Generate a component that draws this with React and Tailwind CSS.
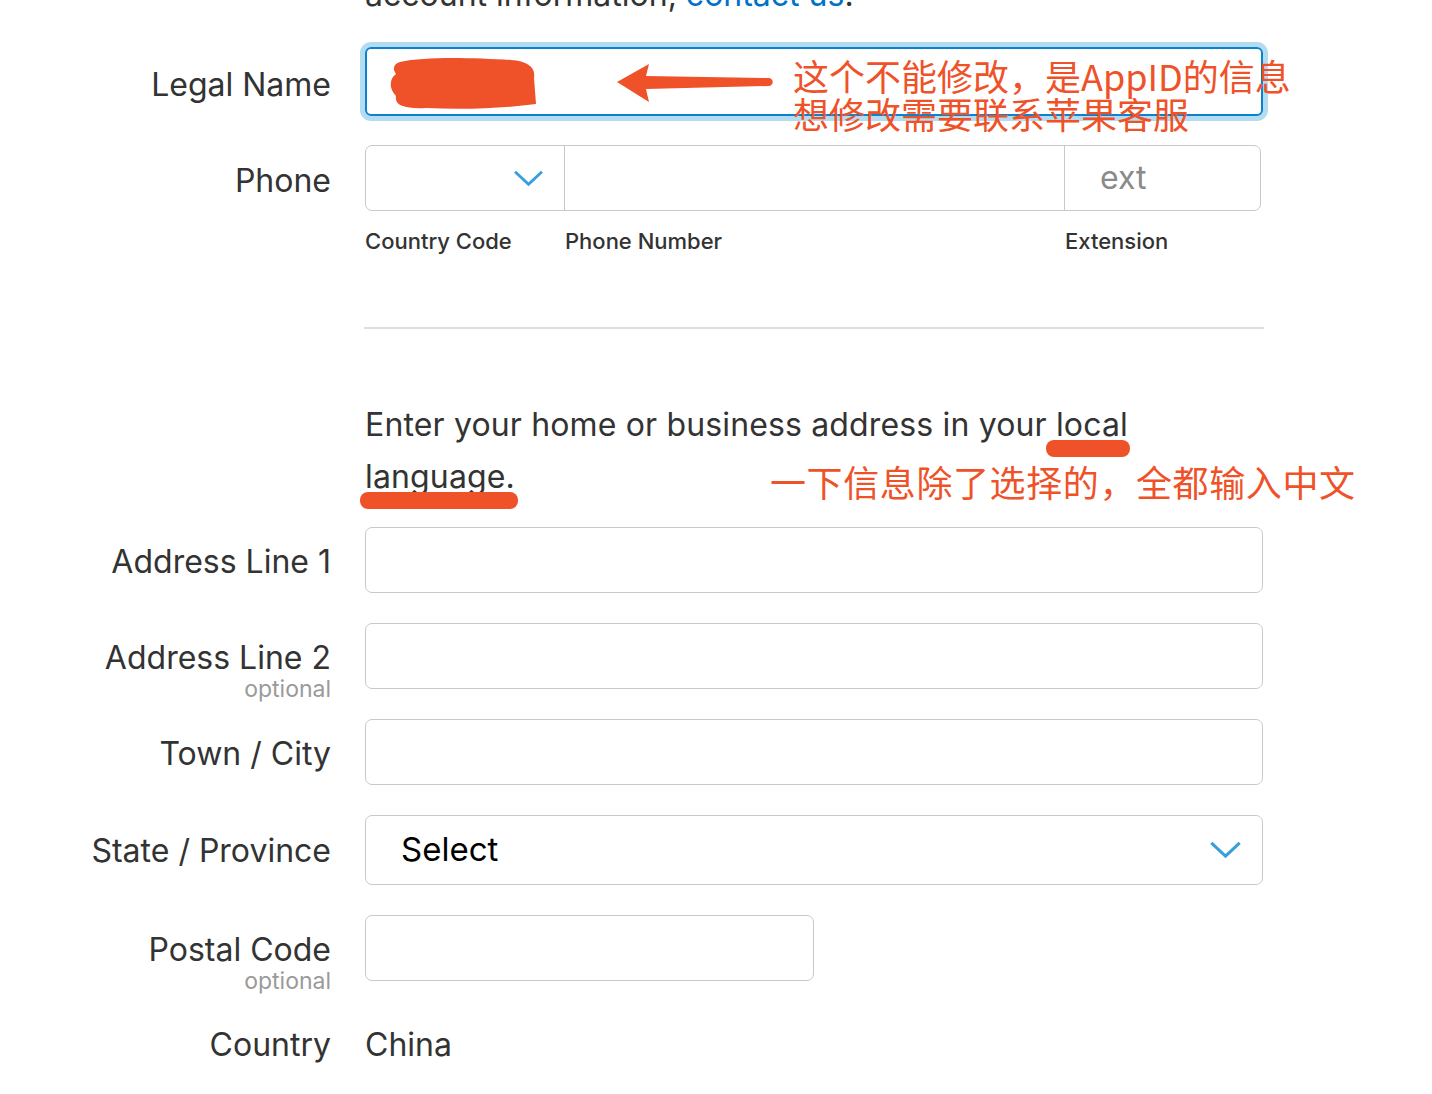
import React from 'react';

const ORANGE = '#ef5228';

function Chevron({ className }) {
  return (
    <svg viewBox="0 0 34 19" className={className} fill="none">
      <path d="M2 2 L17 16 L32 2" stroke="#36a0dc" strokeWidth="3.2" />
    </svg>
  );
}

function Label({ children, optional, pt = 'pt-[15px]' }) {
  return (
    <div className={`w-[331px] shrink-0 ${pt} text-right`}>
      <div className="text-[32px] leading-[40px] text-[#333]">{children}</div>
      {optional && <div className="text-[23px] leading-[22px] text-[#9a9a9a]">optional</div>}
    </div>
  );
}

function TextInput({ w = 'w-[898px]' }) {
  return <div className={`${w} h-[66px] rounded-[7px] border-[1.5px] border-[#c9c9c9] bg-white`} />;
}

export default function App() {
  return (
    <div
      className="relative h-[1094px] w-[1432px] overflow-hidden bg-white"
      style={{ fontFamily: 'Inter, "Noto Sans CJK SC", sans-serif' }}
    >
      <p className="ml-[365px] mt-[-25px] text-[32px] leading-[40px] text-[#333]">
        account information, <span className="text-[#0070c9]">contact us</span>.
      </p>

      {/* legal name */}
      <div className="mt-[32px] flex">
        <Label pt="pt-[18px]">Legal Name</Label>
        <div className="ml-[34px] h-[69px] w-[898px] rounded-[6px] border-2 border-[#0a82d0] shadow-[0_0_0_5px_#b4dcf0]" />
      </div>

      {/* phone */}
      <div className="mt-[29px] flex">
        <Label pt="pt-[16px]">Phone</Label>
        <div className="ml-[34px]">
          <div className="flex h-[66px] w-[896px] rounded-[7px] border-[1.5px] border-[#c9c9c9]">
            <div className="flex w-[198px] items-center justify-end pr-[20px]">
              <Chevron className="h-[17px] w-[31px]" />
            </div>
            <div className="w-[500px] border-l-[1.5px] border-[#c9c9c9]" />
            <div className="flex flex-1 items-center border-l-[1.5px] border-[#c9c9c9] pl-[35px] text-[32px] text-[#8a8a8a]">
              ext
            </div>
          </div>
          <div className="mt-[16px] flex text-[22px] font-medium leading-[28px] text-[#333]">
            <div className="w-[200px]">Country Code</div>
            <div className="w-[500px]">Phone Number</div>
            <div>Extension</div>
          </div>
        </div>
      </div>

      <div className="ml-[364px] mt-[72px] h-[2px] w-[900px] bg-[#dedede]" />

      <p className="ml-[365px] mt-[70px] w-[898px] text-[32px] leading-[52px] tracking-[0.15px] text-[#333]">
        Enter your home or business address in your local language.
      </p>

      <div className="mt-[24px] flex flex-col gap-[30px]">
        <div className="flex h-[66px]">
          <Label>Address Line 1</Label>
          <div className="ml-[34px]"><TextInput /></div>
        </div>
        <div className="flex h-[66px]">
          <Label optional>Address Line 2</Label>
          <div className="ml-[34px]"><TextInput /></div>
        </div>
        <div className="flex h-[66px]">
          <Label>Town / City</Label>
          <div className="ml-[34px]"><TextInput /></div>
        </div>
        <div className="flex h-[70px]">
          <Label pt="pt-[16px]">State / Province</Label>
          <div className="ml-[34px] flex h-[70px] w-[898px] items-center justify-between rounded-[7px] border-[1.5px] border-[#c9c9c9] pl-[35px] pr-[20px]">
            <span className="text-[33px] text-black">Select</span>
            <Chevron className="h-[18px] w-[33px]" />
          </div>
        </div>
        <div className="flex h-[66px]">
          <Label optional>Postal Code</Label>
          <div className="ml-[34px]"><TextInput w="w-[449px]" /></div>
        </div>
      </div>

      <div className="mt-[44px] flex items-center">
        <div className="w-[331px] shrink-0 text-right text-[32px] leading-[40px] text-[#333]">Country</div>
        <div className="ml-[34px] text-[32px] leading-[40px] text-[#333]">China</div>
      </div>

      {/* annotations */}
      <svg className="absolute left-[386px] top-[56px]" width="154" height="54" viewBox="0 0 154 54">
        <path
          d="M14 6 C40 0 90 2 125 4 C142 5 150 12 148 22 L150 48 C120 52 80 54 40 52 C20 53 8 50 10 40 C2 32 4 22 10 18 C6 12 8 8 14 6 Z"
          fill={ORANGE}
        />
      </svg>
      <svg className="absolute left-[615px] top-[62px]" width="160" height="42" viewBox="0 0 160 42">
        <path d="M2 20 L34 2 L31 14 L154 16 C159 17 159 23 154 24 L31 27 L34 40 Z" fill={ORANGE} />
      </svg>
      <div
        className="absolute left-[793px] top-[56px] text-[36px] leading-[38px]"
        style={{ color: ORANGE, fontFamily: '"Noto Sans CJK SC", sans-serif' }}
      >
        这个不能修改，是AppID的信息
        <br />
        想修改需要联系苹果客服
      </div>
      <div className="absolute left-[1046px] top-[440px] h-[17px] w-[84px] rounded-[8px]" style={{ background: ORANGE }} />
      <div className="absolute left-[360px] top-[492px] h-[17px] w-[158px] rounded-[8px]" style={{ background: ORANGE }} />
      <div
        className="absolute left-[770px] top-[461px] text-[36px] leading-[40px] tracking-[0.6px]"
        style={{ color: ORANGE, fontFamily: '"Noto Sans CJK SC", sans-serif' }}
      >
        一下信息除了选择的，全都输入中文
      </div>
    </div>
  );
}
